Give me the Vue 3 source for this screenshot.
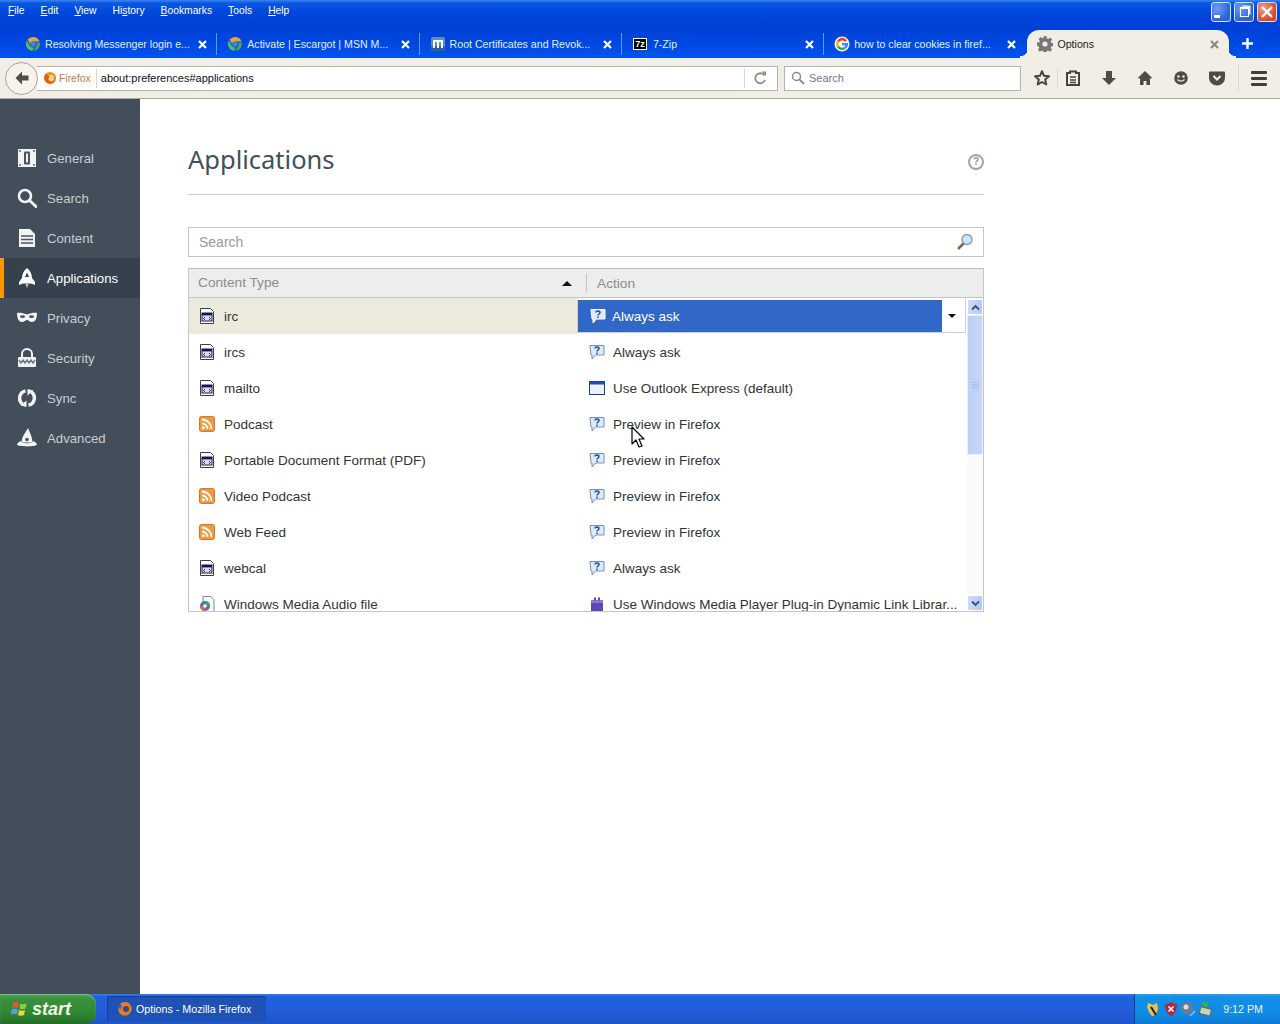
<script setup>
const menus = [
  { k: 'F', r: 'ile' }, { k: 'E', r: 'dit' }, { k: 'V', r: 'iew' }, { k: 'H', r: 'istory', pre: '' },
  { k: 'B', r: 'ookmarks' }, { k: 'T', r: 'ools' }, { k: 'H', r: 'elp' }
]
const tabs = [
  { t: 'Resolving Messenger login e...', i: 'fav-edge' },
  { t: 'Activate | Escargot | MSN M...', i: 'fav-edge' },
  { t: 'Root Certificates and Revok...', i: 'fav-m' },
  { t: '7-Zip', i: 'fav-7z' },
  { t: 'how to clear cookies in firef...', i: 'fav-g' },
  { t: 'Options', i: 'fav-gear', active: true }
]
const nav = [
  { t: 'General', i: 'nav-general' }, { t: 'Search', i: 'nav-search' }, { t: 'Content', i: 'nav-content' },
  { t: 'Applications', i: 'nav-apps', active: true }, { t: 'Privacy', i: 'nav-privacy' },
  { t: 'Security', i: 'nav-security' }, { t: 'Sync', i: 'nav-sync' }, { t: 'Advanced', i: 'nav-advanced' }
]
const rows = [
  { t: 'irc', i: 'ico-app', a: 'Always ask', ai: 'ico-ask', sel: true },
  { t: 'ircs', i: 'ico-app', a: 'Always ask', ai: 'ico-ask' },
  { t: 'mailto', i: 'ico-app', a: 'Use Outlook Express (default)', ai: 'ico-win' },
  { t: 'Podcast', i: 'ico-rss', a: 'Preview in Firefox', ai: 'ico-ask' },
  { t: 'Portable Document Format (PDF)', i: 'ico-app', a: 'Preview in Firefox', ai: 'ico-ask' },
  { t: 'Video Podcast', i: 'ico-rss', a: 'Preview in Firefox', ai: 'ico-ask' },
  { t: 'Web Feed', i: 'ico-rss', a: 'Preview in Firefox', ai: 'ico-ask' },
  { t: 'webcal', i: 'ico-app', a: 'Always ask', ai: 'ico-ask' },
  { t: 'Windows Media Audio file', i: 'ico-wma', a: 'Use Windows Media Player Plug-in Dynamic Link Librar...', ai: 'ico-plug' }
]
const tools = ['tb-list', 'tb-down', 'tb-home', 'tb-smile', 'tb-pocket']
</script>

<template>
  <div class="screen">
    <svg class="defs" aria-hidden="true">
      <defs>
        <symbol id="fav-edge" viewBox="0 0 16 16">
          <path d="M8 1a7 7 0 0 1 6.600 4.500H8A3 3 0 0 0 5 8L2.600 3.600A7 7 0 0 1 8 1z" fill="#e8a33a"/>
          <path d="M1.800 4.600 5 10a3.400 3.400 0 0 0 4 1.200L7.300 15A7 7 0 0 1 1.800 4.600z" fill="#5bb95b"/>
          <path d="M14.800 6.500A7 7 0 0 1 8.400 15l2.600-5a3 3 0 0 0 .1-3.500z" fill="#4fa04f"/>
          <circle cx="8" cy="8" r="2.700" fill="#3f86d8"/>
        </symbol>
        <symbol id="fav-m" viewBox="0 0 16 16">
          <rect x="1" y="1" width="14" height="14" rx="2" fill="#5b8cc4"/>
          <rect x="1" y="10" width="14" height="5" rx="2" fill="#2d5f99"/>
          <path d="M4 12V5h8v7M8 5v7" fill="none" stroke="#fff" stroke-width="2"/>
        </symbol>
        <symbol id="fav-g" viewBox="0 0 16 16">
          <circle cx="8" cy="8" r="7.500" fill="#fff"/>
          <path d="M13 4.400A6 6 0 0 0 3 4.700L5 6.300a3.600 3.600 0 0 1 6-.3z" fill="#e94235"/>
          <path d="M3 4.700a6 6 0 0 0 0 6.600l2-1.600a3.600 3.600 0 0 1 0-3.400z" fill="#fbbc05"/>
          <path d="M3 11.300a6 6 0 0 0 8.800 1.400L10 11a3.600 3.600 0 0 1-5-1.300z" fill="#34a853"/>
          <path d="M8 7v2.200h3.400a3 3 0 0 1-1.400 1.800l1.800 1.700A6 6 0 0 0 14 7z" fill="#4285f4"/>
        </symbol>
        <symbol id="fav-gear" viewBox="0 0 16 16">
          <path d="M6.600 0h2.800l.4 2.300 1.300.6 2-1.300 2 2-1.400 2 .6 1.200 2.300.5v2.800l-2.300.4-.6 1.300 1.300 2-2 2-2-1.400-1.200.6-.5 2.300H6.600l-.4-2.300-1.300-.6-2 1.300-2-2 1.400-2-.6-1.200L0 9.400V6.600l2.300-.4.6-1.300-1.300-2 2-2 2 1.400 1.200-.6z" fill="#777"/>
          <circle cx="8" cy="8" r="2.600" fill="#f1eee5"/>
        </symbol>
        <symbol id="firefox" viewBox="0 0 16 16">
          <circle cx="8" cy="8" r="7" fill="#f28a1c"/>
          <circle cx="9" cy="8" r="3.600" fill="#ffd98a"/>
          <path d="M2.400 3.600C1 7 2 12 6 14c4 1.400 7.600-1 8.600-4-2 2.600-5 3-7 1.600C5.600 10 6 7.400 8 6.500 6 5 4 4 2.400 3.600z" fill="#e25d17"/>
        </symbol>
        <symbol id="firefox-blue" viewBox="0 0 16 16">
          <circle cx="8" cy="8" r="7" fill="#3a64b5"/>
          <path d="M3 3c3-3 9-3 11 2 2 5-2 10-7 9.600C3 14 1 10 1.600 6.500 3 8 4 9 4 8c0-2 1-2 1-4z" fill="#ef7a1c"/>
          <circle cx="9" cy="8" r="3" fill="#2b4a98"/>
        </symbol>
        <symbol id="tb-star" viewBox="0 0 18 18">
          <path d="M9 2.200l2 4.600 5 .5-3.800 3.300 1.100 4.900L9 13l-4.300 2.500 1.100-4.900L2 7.300l5-.5z" fill="none" stroke="#444" stroke-width="2" stroke-linejoin="round"/>
        </symbol>
        <symbol id="tb-list" viewBox="0 0 18 18">
          <path d="M3 4h3V2.500h6V4h3v12H3z" fill="none" stroke="#444" stroke-width="2"/>
          <path d="M6 8h6M6 11h6M6 13.500h6" stroke="#444" stroke-width="1.400"/>
        </symbol>
        <symbol id="tb-down" viewBox="0 0 18 18">
          <path d="M6 2h6v7h4l-7 7-7-7h4z" fill="#4d4d48"/>
        </symbol>
        <symbol id="tb-home" viewBox="0 0 18 18">
          <path d="M9 2 1.500 9.200H4V16h3.600v-4h2.800v4H14V9.200h2.500z" fill="#4d4d48"/>
        </symbol>
        <symbol id="tb-smile" viewBox="0 0 18 18">
          <circle cx="9" cy="9" r="6.800" fill="#4d4d48"/>
          <circle cx="6.500" cy="7.500" r="1.200" fill="#f1eee5"/>
          <circle cx="11.500" cy="7.500" r="1.200" fill="#f1eee5"/>
          <path d="M5.500 10.500c2 2 5 2 7 0" stroke="#f1eee5" stroke-width="1.300" fill="none"/>
        </symbol>
        <symbol id="tb-pocket" viewBox="0 0 18 18">
          <path d="M2 2.500h14a1 1 0 0 1 1 1V9a8 7.500 0 0 1-16 0V3.500a1 1 0 0 1 1-1z" fill="#4d4d48"/>
          <path d="M5.500 7 9 10.500 12.500 7" stroke="#f1eee5" stroke-width="2" fill="none"/>
        </symbol>
        <symbol id="nav-general" viewBox="0 0 20 20">
          <rect x="1" y="1" width="18" height="18" fill="#f3f3f3"/>
          <rect x="7" y="3.500" width="6" height="13" rx="1" fill="#4a5560"/>
          <rect x="9" y="5.500" width="2" height="9" fill="#f3f3f3"/>
          <circle cx="3" cy="3" r=".9" fill="#4a5560"/><circle cx="17" cy="3" r=".9" fill="#4a5560"/>
          <circle cx="3" cy="17" r=".9" fill="#4a5560"/><circle cx="17" cy="17" r=".9" fill="#4a5560"/>
        </symbol>
        <symbol id="nav-search" viewBox="0 0 20 20">
          <circle cx="8" cy="8" r="6" fill="none" stroke="#f3f3f3" stroke-width="2.600"/>
          <path d="M12.500 12.500 19 18.500" stroke="#f3f3f3" stroke-width="3" stroke-linecap="round"/>
        </symbol>
        <symbol id="nav-content" viewBox="0 0 20 20">
          <path d="M2 1h11l5 5v13H2z" fill="#f3f3f3"/>
          <path d="M4 8h12M4 11.500h12M4 15h12" stroke="#4a5560" stroke-width="1.600"/>
        </symbol>
        <symbol id="nav-apps" viewBox="0 0 20 20">
          <path d="M10 0c3.500 3 5 6.500 5 10l3 4v3l-4-1.500H6L2 17v-3l3-4c0-3.500 1.500-7 5-10z" fill="#fff"/>
          <path d="M10 4.500 12 9H8z" fill="#35414d"/>
          <path d="M8.500 16h3L10 20z" fill="#c8ccd0"/>
        </symbol>
        <symbol id="nav-privacy" viewBox="0 0 20 20">
          <path d="M0 5c3-.5 6 0 10 1.500C14 5 17 4.500 20 5c0 5-1.500 9-5 9-2.500 0-3.500-2-5-2s-2.500 2-5 2C1.500 14 0 10 0 5z" fill="#f3f3f3"/>
          <ellipse cx="5.500" cy="8.700" rx="2.500" ry="1.400" fill="#4a5560"/>
          <ellipse cx="14.500" cy="8.700" rx="2.500" ry="1.400" fill="#4a5560"/>
        </symbol>
        <symbol id="nav-security" viewBox="0 0 20 20">
          <path d="M5 9V6a5 5 0 0 1 10 0v3" fill="none" stroke="#f3f3f3" stroke-width="2"/>
          <rect x="1" y="9" width="18" height="10" rx="1" fill="#f3f3f3"/>
          <path d="M2 12l2 3 2-3 2 3 2-3 2 3 2-3 2 3 2-3" fill="none" stroke="#6b7580" stroke-width="1.400"/>
        </symbol>
        <symbol id="nav-sync" viewBox="0 0 20 20">
          <path d="M8.500 2.800A7.500 7.500 0 0 0 5.500 16" fill="none" stroke="#f3f3f3" stroke-width="3.400"/>
          <path d="M11.500 17.200A7.500 7.500 0 0 0 14.500 4" fill="none" stroke="#f3f3f3" stroke-width="3.400"/>
          <path d="M9.500 12.500 9.500 19 3.500 17.500z" fill="#f3f3f3"/>
          <path d="M10.500 7.500 10.500 1 16.500 2.500z" fill="#f3f3f3"/>
        </symbol>
        <symbol id="nav-advanced" viewBox="0 0 20 20">
          <path d="M11 0C9 4 5 8 4.500 14.500h11C15.500 9.500 13 5 11 0z" fill="#f3f3f3"/>
          <path d="M3.800 13C1.800 14 .5 15 0 16.500 1 19 19 19 20 16.500 19.500 15 18 14 16.200 13c0 3-12.400 3-12.400 0z" fill="#f3f3f3"/>
          <circle cx="10" cy="11.500" r="1.800" fill="#4a5560"/>
        </symbol>
        <symbol id="ico-app" viewBox="0 0 16 16">
          <path d="M1.500.5h10l3 3v12h-13z" fill="#fff" stroke="#3f3f4a"/>
          <rect x="3" y="5" width="10" height="8" fill="#d9dcec" stroke="#1a1a4a"/>
          <rect x="3" y="5" width="10" height="2.400" fill="#14145a"/>
          <path d="M6 9l-1.500 1.500L6 12M10 9l1.500 1.500L10 12" stroke="#222" fill="none" stroke-width=".9"/>
        </symbol>
        <symbol id="ico-ask" viewBox="0 0 16 16">
          <path d="M1 1.500h14v9.500H6.500L3 15v-4H2z" fill="#dcebfa" stroke="#7390b5"/>
          <path d="M6 4.500c0-2 4-2 4 0 0 1.500-2 1.500-2 3M8 8.500v1.500" stroke="#234b9c" stroke-width="1.500" fill="none"/>
        </symbol>
        <symbol id="ico-ask-sel" viewBox="0 0 16 16">
          <path d="M1 1.500h14v9.500H6.500L3 15v-4H2z" fill="#dcebfa" stroke="#fff"/>
          <path d="M6 4.500c0-2 4-2 4 0 0 1.500-2 1.500-2 3M8 8.500v1.500" stroke="#234b9c" stroke-width="1.500" fill="none"/>
        </symbol>
        <symbol id="ico-win" viewBox="0 0 16 16">
          <rect x=".5" y="1.500" width="15" height="13" fill="#eaf1fb" stroke="#1c3f80"/>
          <rect x=".5" y="1.500" width="15" height="3" fill="#1d52b0"/>
        </symbol>
        <symbol id="ico-rss" viewBox="0 0 16 16">
          <rect x=".5" y=".5" width="15" height="15" rx="2" fill="#ee9a45" stroke="#d2782a"/>
          <circle cx="4.300" cy="11.700" r="1.500" fill="#fff"/>
          <path d="M3 7.500a5.500 5.500 0 0 1 5.500 5.500M3 3.500A9.500 9.500 0 0 1 12.500 13" fill="none" stroke="#fff" stroke-width="1.800"/>
        </symbol>
        <symbol id="ico-wma" viewBox="0 0 16 16">
          <path d="M4 .5h8l3 3v12H4z" fill="#f3f6fb" stroke="#7c8aa8"/>
          <circle cx="6" cy="10" r="5" fill="#4a74c8"/>
          <path d="M6 5a5 5 0 0 1 5 5H6z" fill="#46a046"/>
          <path d="M1 10a5 5 0 0 0 5 5v-5z" fill="#e06a2a"/>
          <circle cx="6" cy="10" r="1.800" fill="#fff"/>
        </symbol>
        <symbol id="ico-plug" viewBox="0 0 16 16">
          <rect x="2" y="4" width="12" height="11" fill="#5f47b4"/>
          <rect x="2" y="4" width="12" height="3" fill="#8c78d8"/>
          <rect x="5" y="1.500" width="2" height="3" fill="#5f47b4"/>
          <rect x="9" y="1.500" width="2" height="3" fill="#5f47b4"/>
        </symbol>
        <symbol id="flag" viewBox="0 0 18 18">
          <path d="M2 3c2-1 4-1 6 0L7 8C5 7 3 7 1 8z" fill="#e8562a"/>
          <path d="M9.500 3.500c2 1 4 1 6 0l-1 5c-2 1-4 1-6 0z" fill="#8ccf42"/>
          <path d="M.8 9.500c2-1 4-1 6 0l-1 5c-2-1-4-1-6 0z" fill="#5a9af0"/>
          <path d="M8 10c2 1 4 1 6 0l-1 5c-2 1-4 1-6 0z" fill="#f7cf3a"/>
        </symbol>
      </defs>
    </svg>

    <header class="chrome">
      <div class="menubar">
        <span v-for="(m, i) in menus" :key="i" class="menu">
          <template v-if="m.r === 'istory'">Hi<u>s</u>tory</template>
          <template v-else><u>{{ m.k }}</u>{{ m.r }}</template>
        </span>
        <div class="winbtns">
          <span class="winbtn"><span class="min-glyph"></span></span>
          <span class="winbtn"><span class="max-glyph"></span></span>
          <span class="winbtn close">
            <svg width="14" height="14" viewBox="0 0 14 14"><path d="M2 2l10 10M12 2 2 12" stroke="#fff" stroke-width="2.400"/></svg>
          </span>
        </div>
      </div>
      <div class="tabstrip">
        <div v-for="t in tabs" :key="t.t" class="tab" :class="{ active: t.active }">
          <span v-if="t.i === 'fav-7z'" class="sevenz">7z</span>
          <svg v-else class="fav"><use :href="'#' + t.i" /></svg>
          <span class="tabtext">{{ t.t }}</span>
          <svg class="tabx" width="9" height="9" viewBox="0 0 9 9"><path d="M1 1l7 7M8 1 1 8" stroke-width="2.200" /></svg>
        </div>
        <span class="newtab">
          <svg width="11" height="11" viewBox="0 0 11 11"><path d="M5.500 0v11M0 5.500h11" stroke="#fff" stroke-width="2.400"/></svg>
        </span>
      </div>
    </header>

    <div class="toolbar">
      <button class="back">
        <svg width="16" height="16" viewBox="0 0 16 16"><path d="M8 1.500 1.500 8 8 14.500V10.500h6.500v-5H8z" fill="#4d4d48"/></svg>
      </button>
      <div class="urlbar">
        <svg class="ff"><use href="#firefox" /></svg>
        <span class="brand">Firefox</span>
        <span class="urlsep"></span>
        <span class="url">about:preferences#applications</span>
        <span class="urlsep right"></span>
        <svg class="reload" width="14" height="14" viewBox="0 0 14 14"><path d="M11.500 4.500A5 5 0 1 0 12 9" fill="none" stroke="#8c8c88" stroke-width="1.800"/><path d="M9 .5h4v4.500z" fill="#8c8c88"/></svg>
      </div>
      <div class="searchbar">
        <svg width="14" height="14" viewBox="0 0 14 14"><circle cx="5.500" cy="5.500" r="4" fill="none" stroke="#8a8a8a" stroke-width="1.500"/><path d="M8.500 8.500l4.500 4.500" stroke="#8a8a8a" stroke-width="1.800"/></svg>
        <span>Search</span>
      </div>
      <svg class="tool star"><use href="#tb-star" /></svg>
      <span class="toolsep"></span>
      <svg v-for="t in tools" :key="t" class="tool"><use :href="'#' + t" /></svg>
      <span class="toolsep wide"></span>
      <span class="burger"><i></i><i></i><i></i></span>
    </div>

    <main class="body">
      <aside class="sidebar">
        <div v-for="n in nav" :key="n.t" class="navitem" :class="{ active: n.active }">
          <svg class="navico"><use :href="'#' + n.i" /></svg>
          <span>{{ n.t }}</span>
        </div>
      </aside>
      <section class="content">
        <div class="page">
          <div class="heading">
            <h1>Applications</h1>
            <span class="help">?</span>
          </div>
          <div class="filter">
            <span>Search</span>
            <svg width="18" height="18" viewBox="0 0 18 18">
              <path d="M8 10 2 16" stroke="#7a6a55" stroke-width="2.600"/>
              <circle cx="11" cy="6.500" r="5" fill="#cfe4f7" stroke="#7f9fbb" stroke-width="1.400"/>
            </svg>
          </div>
          <div class="table">
            <div class="thead">
              <div class="th first">
                <span>Content Type</span>
                <i class="sort"></i>
              </div>
              <div class="th">Action</div>
            </div>
            <div class="tbody">
              <div class="rows">
                <div v-for="r in rows" :key="r.t" class="row" :class="{ sel: r.sel }">
                  <div class="cell type">
                    <svg class="rico"><use :href="'#' + r.i" /></svg>
                    <span>{{ r.t }}</span>
                  </div>
                  <div v-if="r.sel" class="dropdown">
                    <div class="ddval">
                      <svg class="rico"><use href="#ico-ask-sel" /></svg>
                      <span>{{ r.a }}</span>
                    </div>
                    <div class="ddbtn"><i></i></div>
                  </div>
                  <div v-else class="cell act">
                    <svg class="rico"><use :href="'#' + r.ai" /></svg>
                    <span>{{ r.a }}</span>
                  </div>
                </div>
              </div>
              <div class="scroll">
                <div class="sbtn"><svg width="9" height="7" viewBox="0 0 9 7"><path d="M1 5.500 4.500 2 8 5.500" fill="none" stroke="#35507f" stroke-width="1.800"/></svg></div>
                <div class="thumb"><i></i><i></i><i></i><i></i></div>
                <div class="track"></div>
                <div class="sbtn"><svg width="9" height="7" viewBox="0 0 9 7"><path d="M1 1.500 4.500 5 8 1.500" fill="none" stroke="#35507f" stroke-width="1.800"/></svg></div>
              </div>
            </div>
          </div>
        </div>
      </section>
    </main>

    <footer class="taskbar">
      <div class="start">
        <svg width="18" height="18"><use href="#flag" /></svg>
        <span>start</span>
      </div>
      <div class="task">
        <svg width="16" height="16"><use href="#firefox-blue" /></svg>
        <span>Options - Mozilla Firefox</span>
      </div>
      <div class="tray">
        <svg width="16" height="16" viewBox="0 0 16 16"><path d="M3 2l5 2 4-2 1 6-2 6-4 1-3-4-2-5z" fill="#e8c24a"/><path d="M6 6l5 8" stroke="#222" stroke-width="2"/></svg>
        <svg width="16" height="16" viewBox="0 0 16 16"><path d="M8 1c2 1.500 4 2 6 2 0 6-2 10-6 12C4 13 2 9 2 3c2 0 4-.5 6-2z" fill="#b5263a"/><path d="M5.500 5.500l5 5M10.500 5.500l-5 5" stroke="#fff" stroke-width="1.600"/></svg>
        <svg width="16" height="16" viewBox="0 0 16 16"><circle cx="7" cy="7" r="6" fill="#6d7a8a"/><circle cx="6" cy="6" r="2.500" fill="#d9dee5"/><path d="M10 15l5-5" stroke="#8bc0f0" stroke-width="1.500"/></svg>
        <svg width="16" height="16" viewBox="0 0 16 16"><rect x="2" y="7" width="11" height="7" fill="#c7d3c0" stroke="#4c6a55" transform="rotate(15 8 10)"/><path d="M4 1h7l-2 5H6z" fill="#3fae3f"/></svg>
        <span class="clock">9:12 PM</span>
      </div>
    </footer>

    <svg class="cursor" width="16" height="24" viewBox="0 0 16 24">
      <path d="M1 1v17l4-4 3 7 3-1-3-7h5z" fill="#fff" stroke="#000" stroke-width="1.200" stroke-linejoin="round"/>
    </svg>
  </div>
</template>

<style>
html, body { margin: 0; background: #fff; }
</style>

<style scoped>
.screen {
  position: relative;
  width: 1280px;
  height: 1024px;
  overflow: hidden;
  display: flex;
  flex-direction: column;
  font-family: "Liberation Sans", "Noto Sans", sans-serif;
  color: #333;
}
.defs { position: absolute; width: 0; height: 0; }

.chrome {
  height: 58px;
  flex: none;
  background: linear-gradient(#3b86f0 0, #0b58e4 3px, #0247dc 12px, #0040d6 26px, #0046de 40px, #0052ee 58px);
}
.menubar {
  height: 20px;
  display: flex;
  align-items: center;
  padding-left: 8px;
  gap: 16px;
  color: #fff;
  font-size: 10.300px;
}
.menu { color: #fff; }
.winbtns { margin-left: auto; align-self: flex-start; display: flex; gap: 3px; padding: 2px 3px 0 0; }
.winbtn {
  width: 18px;
  height: 18px;
  border: 1px solid #d4e2fa;
  border-radius: 3px;
  background: radial-gradient(circle at 30% 30%, #6f9ef5, #2a62dc 70%);
  display: flex;
  align-items: center;
  justify-content: center;
}
.winbtn.close { background: radial-gradient(circle at 30% 30%, #f0a08a, #d6482a 70%); }
.min-glyph { width: 6px; height: 3px; background: #fff; margin: 8px 8px 0 0; }
.max-glyph { width: 7px; height: 7px; border: 1.500px solid #fff; border-top-width: 2px; box-shadow: 2px -2px 0 -0.500px #dfe9fb; }
.tabstrip {
  height: 38px;
  display: flex;
  padding-left: 15px;
  align-items: flex-end;
}
.tab {
  width: 202.300px;
  height: 28px;
  box-sizing: border-box;
  padding: 0 10px;
  display: flex;
  align-items: center;
  gap: 4px;
  color: #e3edff;
  font-size: 10.600px;
  background: linear-gradient(#6c95ea, #6c95ea) right center / 1px 22px no-repeat;
}
.tab:nth-child(5) { background: none; }
.tab.active {
  position: relative;
  border-radius: 12px 12px 0 0;
  background: #f1eee5;
  color: #222;
  width: 202px;
  margin-left: 1px;
}
.tab.active::before, .tab.active::after {
  content: "";
  position: absolute;
  bottom: 0;
  width: 8px;
  height: 10px;
}
.tab.active::before { left: -7px; background: radial-gradient(circle at 0 0, transparent 8px, #f1eee5 8.500px); }
.tab.active::after { right: -7px; background: radial-gradient(circle at 100% 0, transparent 8px, #f1eee5 8.500px); }
.fav { width: 16px; height: 16px; flex: none; }
.sevenz {
  width: 14px;
  height: 12px;
  margin: 0 2px 0 1px;
  flex: none;
  background: #000;
  border: 1px solid #fff;
  box-sizing: border-box;
  color: #fff;
  font: bold 9px/10px "Liberation Sans", sans-serif;
  text-align: center;
}
.tabtext { flex: 1; white-space: nowrap; }
.tabx { flex: none; stroke: #fff; }
.tab.active .tabx { stroke: #8a8a85; }
.newtab { margin: 0 0 9px 13px; height: 11px; display: flex; }

.toolbar {
  height: 41px;
  flex: none;
  box-sizing: border-box;
  border-bottom: 1px solid #a9a8a0;
  background: #f1eee5;
  display: flex;
  align-items: center;
  padding-left: 5px;
}
.back {
  width: 33px;
  height: 33px;
  border-radius: 50%;
  border: 1px solid #a5a39b;
  background: #f5f3ec;
  padding: 0;
  display: flex;
  align-items: center;
  justify-content: center;
  position: relative;
  z-index: 1;
  flex: none;
}
.urlbar {
  width: 741px;
  height: 25px;
  margin-left: -1px;
  box-sizing: border-box;
  border: 1px solid #b5b4ac;
  border-left: 0;
  background: #fff;
  display: flex;
  align-items: center;
  padding-left: 6px;
  font-size: 11px;
  flex: none;
}
.ff { width: 14px; height: 14px; flex: none; }
.brand { color: #c87a3c; margin-left: 2px; font-size: 10.400px; }
.urlsep { width: 1px; height: 19px; background: #d8d6cf; margin: 0 4px 0 5px; }
.url { color: #111; flex: 1; }
.urlsep.right { margin: 0 8px 0 0; }
.reload { margin-right: 10px; }
.searchbar {
  width: 237px;
  height: 25px;
  margin-left: 6px;
  box-sizing: border-box;
  border: 1px solid #b5b4ac;
  background: #fff;
  display: flex;
  align-items: center;
  gap: 4px;
  padding-left: 6px;
  color: #777;
  font-size: 11px;
  flex: none;
}
.tool { width: 18px; height: 18px; margin-right: 18px; flex: none; }
.tool.star { margin: 0 0 0 12px; }
.toolsep { width: 1px; height: 18px; background: #dbd9d1; margin: 0 6px 0 6px; }
.toolsep.wide { height: 28px; margin: 0 12px 0 -6px; }
.burger { display: flex; flex-direction: column; gap: 3px; width: 16px; }
.burger i { height: 3px; background: #3f3f3b; border-radius: 1px; }

.body { flex: 1; display: flex; min-height: 0; }
.sidebar {
  width: 140px;
  flex: none;
  padding-top: 39px;
  box-sizing: border-box;
  background: #424f5a;
  color: #c8cdd1;
  font-size: 13.200px;
}
.navitem {
  height: 40px;
  box-sizing: border-box;
  display: flex;
  align-items: center;
  padding-left: 17px;
  gap: 10px;
}
.navitem.active {
  background: #35414d;
  color: #fff;
  border-left: 4px solid #ff9500;
  padding-left: 13px;
}
.navico { width: 20px; height: 20px; flex: none; }

.content { flex: 1; background: #fff; padding: 0 0 0 48px; }
.page { width: 796px; }
.heading {
  height: 96px;
  box-sizing: border-box;
  border-bottom: 1px solid #cfcfcf;
  display: flex;
  align-items: center;
  justify-content: space-between;
  padding-top: 28px;
}
h1 {
  margin: -4px 0 0;
  font-family: "Noto Sans", sans-serif;
  font-weight: 400;
  font-size: 25.500px;
  color: #424f5a;
}
.help {
  width: 12px;
  height: 12px;
  margin-top: 2px;
  border: 2px solid #a0a5a9;
  border-radius: 50%;
  color: #8d9296;
  font: bold 10px/12px "Liberation Sans", sans-serif;
  text-align: center;
}
.filter {
  margin-top: 32px;
  height: 30px;
  box-sizing: border-box;
  border: 1px solid #c6c6c6;
  background: #fff;
  display: flex;
  align-items: center;
  justify-content: space-between;
  padding: 0 9px 0 10px;
  font-size: 14px;
  color: #9a9a9a;
}
.table {
  margin-top: 11px;
  height: 344px;
  box-sizing: border-box;
  border: 1px solid #c6c6c6;
  border-top-color: #bdbdbd;
  display: flex;
  flex-direction: column;
}
.thead {
  height: 29px;
  flex: none;
  box-sizing: border-box;
  border-bottom: 1px solid #c3c3c3;
  background: #eeedee;
  display: flex;
  align-items: center;
  color: #8c8c8c;
  font-size: 13.700px;
}
.th { padding-left: 10px; }
.th.first {
  width: 398px;
  box-sizing: border-box;
  height: 18px;
  padding-left: 9px;
  border-right: 1px solid #c4c4c4;
  display: flex;
  align-items: center;
  justify-content: space-between;
  padding-right: 14px;
  line-height: 18px;
}
.sort {
  width: 0; height: 0;
  border-left: 5px solid transparent;
  border-right: 5px solid transparent;
  border-bottom: 5px solid #111;
}
.tbody { flex: 1; display: flex; min-height: 0; overflow: hidden; }
.rows { width: 778px; flex: none; overflow: hidden; }
.row {
  height: 36px;
  display: flex;
  font-size: 13.500px;
  color: #333;
}
.row.sel { background: linear-gradient(90deg, #ece9dd 0, #ece9dd 388px, #fff 388px); }
.cell { display: flex; align-items: center; white-space: nowrap; }
.cell.type { width: 388px; flex: none; padding-left: 10px; box-sizing: border-box; gap: 9px; }
.cell.act { padding-left: 12px; gap: 8px; width: 389px; flex: none; box-sizing: border-box; }
.rico { width: 16px; height: 16px; flex: none; }
.dropdown {
  width: 389px;
  height: 35px;
  flex: none;
  box-sizing: border-box;
  border: 1px solid #cfcfcf;
  border-top-width: 2px;
  border-top-color: #fff;
  display: flex;
  background: #fff;
}
.ddval {
  flex: 1;
  background: #3168c7;
  color: #fff;
  display: flex;
  align-items: center;
  padding-left: 12px;
  gap: 6px;
}
.ddbtn { width: 23px; display: flex; align-items: center; justify-content: center; padding-right: 4px; box-sizing: border-box; }
.ddbtn i {
  width: 0; height: 0;
  border-left: 4px solid transparent;
  border-right: 4px solid transparent;
  border-top: 4px solid #111;
}
.scroll {
  width: 16px;
  flex: none;
  display: flex;
  flex-direction: column;
  background: #fafaf8;
  padding-top: 1px;
}
.sbtn {
  height: 16px;
  flex: none;
  border: 1px solid #fff;
  box-sizing: border-box;
  border-radius: 2px;
  background: linear-gradient(90deg, #cfdcf6, #b4c8f2);
  display: flex;
  align-items: center;
  justify-content: center;
}
.thumb {
  height: 140px;
  flex: none;
  box-sizing: border-box;
  border: 1px solid #e8effb;
  border-radius: 2px;
  background: linear-gradient(90deg, #bcd0f5, #c6d8f7);
  display: flex;
  flex-direction: column;
  align-items: center;
  justify-content: center;
  gap: 1px;
}
.thumb i { width: 7px; height: 1px; background: #a9bfe8; }
.track { flex: 1; }

.taskbar {
  height: 30px;
  flex: none;
  display: flex;
  align-items: stretch;
  background: linear-gradient(#2f7ef0 0, #1f60de 3px, #245edb 50%, #1f55cc 100%);
  color: #fff;
  font-size: 10.700px;
}
.start {
  width: 96px;
  box-sizing: border-box;
  padding-left: 11px;
  display: flex;
  align-items: center;
  gap: 3px;
  background: linear-gradient(#4d9e4f 0, #3b8f3d 20%, #2f8a32 60%, #256d28 100%);
  border-radius: 0 10px 10px 0;
  box-shadow: inset 0 1px 1px #7cc47c;
  font: italic bold 18px "Liberation Sans", sans-serif;
  color: #f4f4ea;
}
.task {
  width: 159px;
  margin: 2px 0 2px 11px;
  box-sizing: border-box;
  border-radius: 2px;
  background: #1e52b7;
  box-shadow: inset 1px 1px 1px #153f95;
  padding-left: 10px;
  display: flex;
  align-items: center;
  gap: 3px;
}
.tray {
  margin-left: auto;
  width: 146px;
  box-sizing: border-box;
  border-left: 1px solid #103d92;
  background: linear-gradient(#2aa0f2 0, #1290e8 10%, #0f8ae4 70%, #0f78d4 100%);
  display: flex;
  align-items: center;
  padding-left: 10px;
  gap: 1.500px;
}
.clock { margin-left: auto; margin-right: 17px; color: #eaf4ff; }

.cursor { position: absolute; left: 631px; top: 426px; }
</style>
